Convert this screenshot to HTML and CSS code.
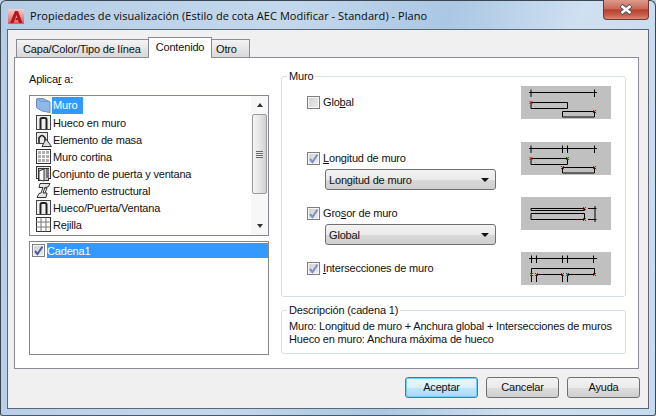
FILE: index.html
```html
<!DOCTYPE html>
<html lang="es">
<head>
<meta charset="utf-8">
<title>Propiedades de visualización</title>
<link rel="stylesheet" href="styles.css">
</head>
<body>
<div class="window">
  <div class="titlebar">
    <svg class="appicon" width="16" height="15" viewBox="0 0 16 15">
      <defs><linearGradient id="ag" x1="0" y1="0" x2="0" y2="1"><stop offset="0" stop-color="#f6cfcf"/><stop offset="1" stop-color="#dd5a5a"/></linearGradient></defs>
      <rect width="16" height="15" fill="url(#ag)"/>
      <path d="M2 14 L7 2 H10 L14.5 14 H11 L10 11 H7.5 L8 9 H9.5 L8.5 6 L5.5 14 Z" fill="#b3161f"/>
    </svg>
    <span class="title">Propiedades de visualización (Estilo de cota AEC Modificar - Standard) - Plano</span>
    <div class="close"><svg width="14" height="11" viewBox="0 0 14 11"><path d="M2 1.5 L12 9.5 M12 1.5 L2 9.5" stroke="#4a5560" stroke-width="4.4"/><path d="M2.5 2 L11.5 9 M11.5 2 L2.5 9" stroke="#fff" stroke-width="2.6"/></svg></div>
  </div>
  <div class="client">
    <div class="tabs">
      <div class="tab">Capa/Color/Tipo de línea</div>
      <div class="tab active">Contenido</div>
      <div class="tab last">Otro</div>
    </div>
    <div class="panel">
      <div class="leftcol">
        <div class="apply">Aplica<u>r</u> a:</div>
        <div class="list objects">
          <div class="items">
            <div class="item"><svg class="ico" width="17" height="17" viewBox="0 0 17 17"><path d="M1.5 2.5 Q1.5 1.5 3 1.5 H8 L15 5 V15.5 L7 14 L2 11 Q1.5 10.5 1.5 10 Z" fill="#8db9ea" stroke="#6a8cb8"/><path d="M1.5 2 L6.5 4.5 H15" fill="none" stroke="#6a8cb8" stroke-width=".7"/></svg><span class="label sel">Muro</span></div>
            <div class="item"><svg class="ico" width="17" height="17" viewBox="0 0 17 17"><rect x="1.5" y="1.5" width="14" height="14" fill="#f0f0f0" stroke="#444"/><path d="M5.5 15 V5.5 Q5.5 4 7 4 H10 Q11.5 4 11.5 5.5 V15" fill="none" stroke="#222" stroke-width="2"/></svg><span class="label">Hueco en muro</span></div>
            <div class="item"><svg class="ico" width="17" height="17" viewBox="0 0 17 17"><rect x="1.5" y="1.5" width="11" height="11" fill="#e8e8e8" stroke="#444"/><path d="M4 12 V7 Q7 2 10 7 V10" fill="none" stroke="#222" stroke-width="1.6"/><path d="M11 8 L16.5 15.5 H7 Z" fill="#ddd" stroke="#333"/></svg><span class="label">Elemento de masa</span></div>
            <div class="item"><svg class="ico" width="17" height="17" viewBox="0 0 17 17"><rect x="1.5" y="1.5" width="14" height="14" fill="#fff" stroke="#333"/><path d="M3 3h3v3H3zM7 3h3v3H7zM11 3h3v3h-3zM3 7h3v3H3zM7 7h3v3H7zM11 7h3v3h-3zM3 11h3v3H3zM7 11h3v3H7zM11 11h3v3h-3z" fill="#b0b0b0"/></svg><span class="label">Muro cortina</span></div>
            <div class="item tight"><svg class="ico" width="17" height="17" viewBox="0 0 17 17"><rect x="1.5" y="1.5" width="14" height="12" fill="#eee" stroke="#333"/><rect x="3.5" y="3.5" width="10" height="12" fill="#ccc" stroke="#333"/><path d="M4 6 L9 4 V16 L4 15 Z" fill="#fff" stroke="#333"/><rect x="11" y="4" width="3" height="9" fill="#777"/></svg><span class="label">Conjunto de puerta y ventana</span></div>
            <div class="item"><svg class="ico" width="17" height="17" viewBox="0 0 17 17"><path d="M5 1.5 H15 L13 5 L10 5.5 L8 11 H12 L11 15.5 H2 L4 11.5 L6 11 L8 5.5 H4 Z" fill="#e6e6e6" stroke="#333"/><path d="M9 6 L12 6 L10 11" fill="none" stroke="#333"/></svg><span class="label">Elemento estructural</span></div>
            <div class="item"><svg class="ico" width="17" height="17" viewBox="0 0 17 17"><rect x="1.5" y="1.5" width="14" height="14" fill="#f0f0f0" stroke="#444"/><path d="M5.5 15 V5.5 Q5.5 4 7 4 H10 Q11.5 4 11.5 5.5 V15" fill="none" stroke="#222" stroke-width="2"/></svg><span class="label">Hueco/Puerta/Ventana</span></div>
            <div class="item"><svg class="ico" width="17" height="17" viewBox="0 0 17 17"><rect x="1.5" y="1.5" width="14" height="14" fill="#fff" stroke="#333"/><path d="M1.5 6H15.5M1.5 11H15.5M6 1.5V15.5M11 1.5V15.5" stroke="#777"/></svg><span class="label">Rejilla</span></div>
          </div>
          <div class="scrollbar">
            <div class="sbtn"><span class="up"></span></div>
            <div class="thumb"><span class="grip"></span></div>
            <div class="track"></div>
            <div class="sbtn"><span class="down"></span></div>
          </div>
        </div>
        <div class="list chains">
          <div class="chain">
            <span class="check small on"><svg width="11" height="11" viewBox="0 0 11 11"><path d="M2 6 L4.5 9 L9.5 1.5" fill="none" stroke="#4a5fa8" stroke-width="2"/></svg></span>
            <span class="chainlabel">Cadena1</span>
          </div>
        </div>
      </div>
      <div class="rightcol">
        <fieldset class="group wall">
          <legend>Muro</legend>
          <div class="wallbody">
          <div class="optrow">
            <div class="opt">
              <label class="checkline"><span class="check"></span><span>Glo<u>b</u>al</span></label>
            </div>
            <svg class="diagram" width="90" height="33" viewBox="0 0 90 33">
              <rect width="90" height="33" fill="#c0c0c0"/>
              <path d="M8 6.5H76M10 3.5V11M73.5 3.5V11M10 16.5H46.5V22.5H10ZM41.5 25.5H73.5V31H41.5Z" fill="none" stroke="#000"/>
              <path d="M8.5 15L11.5 18M11.5 15L8.5 18M72 24L75 27M75 24L72 27" stroke="#e00000"/>
            </svg>
          </div>
          <div class="optrow">
            <div class="opt">
              <label class="checkline"><span class="check on"><svg width="11" height="11" viewBox="0 0 11 11"><path d="M2 6 L4.5 9 L9.5 1.5" fill="none" stroke="#7d8fc4" stroke-width="2"/></svg></span><span><u>L</u>ongitud de muro</span></label>
              <div class="select"><span>Longitud de muro</span><i class="caret"></i></div>
            </div>
            <svg class="diagram" width="90" height="33" viewBox="0 0 90 33">
              <rect width="90" height="33" fill="#c0c0c0"/>
              <path d="M8 6.5H76M10 3.5V11M41.5 3.5V11M46.5 3.5V11M73.5 3.5V11M10 16.5H46.5V22.5H10ZM41.5 25.5H73.5V31H41.5Z" fill="none" stroke="#000"/>
              <path d="M8.5 15L11.5 18M11.5 15L8.5 18M45 15L48 18M48 15L45 18M40 24L43 27M43 24L40 27M72 24L75 27M75 24L72 27" stroke="#e00000"/>
            </svg>
          </div>
          <div class="optrow">
            <div class="opt">
              <label class="checkline"><span class="check on"><svg width="11" height="11" viewBox="0 0 11 11"><path d="M2 6 L4.5 9 L9.5 1.5" fill="none" stroke="#7d8fc4" stroke-width="2"/></svg></span><span>Gro<u>s</u>or de muro</span></label>
              <div class="select"><span>Global</span><i class="caret"></i></div>
            </div>
            <svg class="diagram" width="90" height="33" viewBox="0 0 90 33">
              <rect width="90" height="33" fill="#c0c0c0"/>
              <path d="M10 11.5H63.5V13.5H10ZM10 16.5H63.5V22.5H10ZM67 11.5H75.5M67 22.5H75.5M74 9V25" fill="none" stroke="#000"/>
              <path d="M62 10L65 13M65 10L62 13M62 21L65 24M65 21L62 24" stroke="#e00000"/>
            </svg>
          </div>
          <div class="optrow">
            <div class="opt">
              <label class="checkline"><span class="check on"><svg width="11" height="11" viewBox="0 0 11 11"><path d="M2 6 L4.5 9 L9.5 1.5" fill="none" stroke="#7d8fc4" stroke-width="2"/></svg></span><span><u>I</u>ntersecciones de muro</span></label>
            </div>
            <svg class="diagram" width="90" height="33" viewBox="0 0 90 33">
              <rect width="90" height="33" fill="#c0c0c0"/>
              <path d="M8 6.5H76M10.5 3.5V11M15.5 3.5V11M41.5 3.5V11M46.5 3.5V11M72.5 3.5V11M10.5 30V16.5H73.5V22.5H46.5V30M41.5 30V22.5H15.5V30" fill="none" stroke="#000"/>
              <path d="M9 21L12 24M12 21L9 24M14 21L17 24M17 21L14 24M40 21L43 24M43 21L40 24M45 21L48 24M48 21L45 24M72 21L75 24M75 21L72 24" stroke="#e00000"/>
            </svg>
          </div>
          </div>
        </fieldset>
        <fieldset class="group desc">
          <legend>Descripción (cadena 1)</legend>
          <div class="descbody">
            <div class="line">Muro: Longitud de muro + Anchura global + Intersecciones de muros</div>
            <div class="line">Hueco en muro: Anchura máxima de hueco</div>
          </div>
        </fieldset>
      </div>
    </div>
    <div class="footer">
      <div class="button default">Aceptar</div>
      <div class="button">Cancelar</div>
      <div class="button">Ayuda</div>
    </div>
  </div>
</div>
</body>
</html>
```
FILE: styles.css
```css
html, body { margin: 0; padding: 0; background: #bcd3ea; }
body { width: 656px; height: 416px; overflow: hidden; font: 11px/13px "Liberation Sans", Tahoma, sans-serif; letter-spacing: -.18px; color: #111; }
u { text-decoration: underline; }

.window {
  box-sizing: border-box; width: 656px; height: 416px;
  border: 1px solid #3b4650; border-bottom-color: #4a5560; border-radius: 6px 6px 3px 3px;
  background: linear-gradient(100deg, #b4cde6 0%, #c4d8ec 40%, #aac7e4 62%, #cfe0f0 80%, #c6dbef 100%);
  padding: 0 6px 6px 6px; display: flex; flex-direction: column;
}
.titlebar { height: 28px; display: flex; align-items: center; flex: none; position: relative; }
.appicon { margin: 2px 6px 0 1px; flex: none; }
.title { font: 11px/16px "Open Sans", sans-serif; letter-spacing: .05px; color: #0a0a0a; margin-top: 2px; white-space: nowrap; }
.close {
  position: absolute; right: 0; top: -1px; width: 46px; height: 20px; box-sizing: border-box;
  border: 1px solid #6b3a34; border-top: none; border-radius: 0 0 4px 4px;
  background: linear-gradient(#dc9b8c 0%, #c96a5a 45%, #b8402c 52%, #c9604a 80%, #d98b76 100%);
  display: flex; align-items: center; justify-content: center;
}

.client {
  flex: 1; border: 1px solid #5c6873; background: #f0f0f0;
  padding: 7px 9px 0 6px; display: flex; flex-direction: column; min-height: 0;
}
.tabs { display: flex; align-items: flex-end; padding-left: 2px; height: 21px; flex: none; position: relative; z-index: 1; }
.tab {
  box-sizing: border-box; height: 18px; padding: 3px 0 0 6px; border: 1px solid #898c95; border-bottom: none; border-right: none;
  background: linear-gradient(#f4f4f4, #e6e6e6 50%, #d8d8d8); white-space: nowrap; width: 132px; margin-bottom: 1px;
}
.tab.active { background: #fff; width: 64px; height: 21px; margin-bottom: 0; padding: 3px 0 0 0; border-right: 1px solid #898c95; text-align: center; }
.tab.last { width: 38px; border-left: none; border-right: 1px solid #898c95; padding-left: 4px; }

.panel {
  box-sizing: border-box; height: 312px; margin-top: -1px; background: #fff; border: 1px solid #898c95;
  padding: 12px 11px 0 14px; display: grid; grid-template-columns: 240px 345px; column-gap: 12px; flex: none;
}
.apply { margin-top: 3px; height: 22px; }
.leftcol { display: flex; flex-direction: column; }
.list { box-sizing: border-box; border: 1px solid #828790; background: #fff; width: 240px; }
.objects { height: 141px; display: flex; overflow: hidden; }
.chains { height: 114px; margin-top: 5px; padding: 1px 0 0 2px; }
.items { flex: 1; padding-top: 1px; overflow: hidden; }
.item { height: 17px; display: flex; align-items: center; padding-left: 5px; }
.ico { flex: none; }
.label { padding: 2px 1px; white-space: nowrap; position: relative; top: 1px; }
.item.tight .label { margin-left: -1px; }
.label.sel { background: #3399ff; color: #fff; padding: 2px 6px 2px 1px; top: 0; }
.scrollbar { width: 17px; flex: none; display: flex; flex-direction: column; background: #f7f7f7; }
.sbtn { height: 18px; display: flex; align-items: center; justify-content: center; flex: none; }
.up { border: 3.5px solid transparent; border-bottom: 4px solid #333; border-top: none; }
.down { border: 3.5px solid transparent; border-top: 4px solid #333; border-bottom: none; }
.thumb {
  box-sizing: border-box; height: 80px; margin: 0 1px; border: 1px solid #9a9a9a; border-radius: 2px;
  background: linear-gradient(90deg, #f4f4f4, #e6e6e6 50%, #d0d0d0); display: flex; align-items: center; justify-content: center;
}
.grip { width: 7px; height: 7px; background: repeating-linear-gradient(#666 0 1px, #eee 1px 2px); }
.track { flex: 1; }

.chain { display: flex; align-items: center; height: 15px; }
.chainlabel { flex: 1; background: #3399ff; color: #fff; height: 15px; line-height: 16px; }
.check {
  box-sizing: border-box; width: 13px; height: 13px; border: 1px solid #7f7f7f; background: linear-gradient(135deg, #cfcfcf, #eeeeee);
  box-shadow: inset 0 0 0 1px #f6f6f6; display: flex; align-items: center; justify-content: center; flex: none;
}
.check.small { margin-right: 2px; }

.rightcol { display: flex; flex-direction: column; }
.group { margin: 0; padding: 0; min-width: 0; border: 1px solid #d5dfe5; border-radius: 3px; box-sizing: border-box; }
.group legend { padding: 0 2px; margin-left: 5px; line-height: 13px; }
.wall { height: 227px; }
.wallbody { padding: 3px 0 0 25px; }
.desc { height: 50px; margin-top: 7px; }
.descbody { padding: 3px 0 0 7px; }
.line { white-space: nowrap; }
.optrow { display: flex; align-items: flex-start; height: 55px; }
.optrow:first-child { height: 56px; }
.opt { width: 214px; padding-top: 10px; flex: none; }
.checkline { display: flex; align-items: center; height: 13px; gap: 3px; }
.diagram { display: block; flex: none; }
.select {
  box-sizing: border-box; width: 171px; height: 21px; margin: 4px 0 0 18px; padding: 1px 3px 0 3px;
  border: 1px solid #707070; border-radius: 3px; background: linear-gradient(#f2f2f2, #ebebeb 50%, #d8d8d8 52%, #cfcfcf);
  display: flex; align-items: center; justify-content: space-between;
}
.caret { border: 4px solid transparent; border-top: 4px solid #111; border-bottom: none; margin-right: 3px; }

.footer { display: flex; justify-content: flex-end; gap: 8px; padding: 8px 0 0 0; margin-right: -1px; }
.button {
  box-sizing: border-box; width: 73px; height: 21px; border: 1px solid #707070; border-radius: 3px;
  background: linear-gradient(#f2f2f2, #ebebeb 50%, #dddddd 52%, #cfcfcf); display: flex; align-items: center; justify-content: center;
}
.button.default { border-color: #3c7fb1; box-shadow: inset 0 0 0 1px #6fd0f5; background: linear-gradient(#eaf6fd, #d9f0fc 50%, #bee6fd 52%, #a7d9f5); }
```
